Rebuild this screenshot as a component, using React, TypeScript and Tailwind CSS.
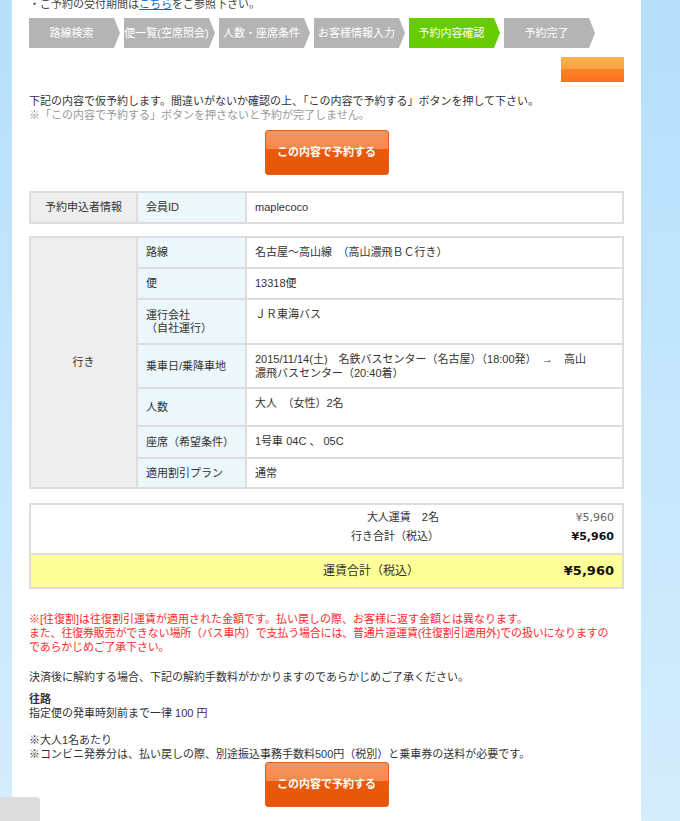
import React from 'react';

const STEPS = ['路線検索', '便一覧(空席照会)', '人数・座席条件', 'お客様情報入力', '予約内容確認', '予約完了'];
const ACTIVE_STEP = 4;

const ROWS: { label: React.ReactNode; value: React.ReactNode; h: string }[] = [
  { label: '路線', value: '名古屋～高山線　（高山濃飛ＢＣ行き）', h: 'h-[31px]' },
  { label: '便', value: '13318便', h: 'h-[31px]' },
  {
    label: (
      <>
        運行会社
        <br />
        （自社運行）
      </>
    ),
    value: 'ＪＲ東海バス',
    h: 'h-[45px]',
  },
  {
    label: '乗車日/乗降車地',
    value: (
      <>
        2015/11/14(土)　名鉄バスセンター（名古屋）（18:00発）　→　高山
        <br />
        濃飛バスセンター（20:40着）
      </>
    ),
    h: 'h-[44px]',
  },
  { label: '人数', value: '大人　（女性）2名', h: 'h-[38px]' },
  { label: '座席（希望条件）', value: '1号車 04C 、 05C', h: 'h-[32px]' },
  { label: '適用割引プラン', value: '通常', h: 'h-[30px]' },
];

function ReserveButton() {
  return (
    <button
      type="button"
      className="w-[124px] h-[45px] rounded-[3px] border border-[#e0601c] bg-[linear-gradient(to_bottom,#f6935c_0%,#f38a50_42%,#ea5a0c_42%,#e65506_100%)] text-white text-[11px] font-bold"
    >
      この内容で予約する
    </button>
  );
}

function StepBar() {
  return (
    <div className="flex gap-[4px] mt-[6px]">
      {STEPS.map((s, i) => (
        <div
          key={s}
          className={`w-[91px] h-[30px] pr-[6px] flex items-center justify-center text-white text-[11px] whitespace-nowrap [clip-path:polygon(0_0,85px_0,91px_50%,85px_100%,0_100%)] ${
            i === ACTIVE_STEP ? 'bg-[#66cc00]' : 'bg-[#b4b4b4]'
          }`}
        >
          {s}
        </div>
      ))}
    </div>
  );
}

export default function App() {
  return (
    <div
      className="relative w-full h-[821px] overflow-hidden flex bg-[linear-gradient(to_bottom,#b6dffb,#d4edfd)] text-[#333] text-[11px]"
      style={{ fontFamily: '"Liberation Sans", "Noto Sans CJK JP", sans-serif' }}
    >
      <div className="ml-[12px] w-[629px] bg-white px-[17px]">
        <p className="-mt-[4px] leading-[16px] text-[#444]">
          ・ご予約の受付期間は<span className="text-[#0a6fc2] underline">こちら</span>をご参照下さい。
        </p>

        <StepBar />

        <div className="flex justify-end mt-[9px]">
          <div className="w-[63px] h-[25px] bg-[linear-gradient(to_bottom,#f9b352_0%,#f8a243_48%,#fd8427_48%,#f9721b_100%)]" />
        </div>

        <div className="mt-[12px] leading-[14px]">
          <p>下記の内容で仮予約します。間違いがないか確認の上、「この内容で予約する」ボタンを押して下さい。</p>
          <p className="text-[#999]">※「この内容で予約する」ボタンを押さないと予約が完了しません。</p>
        </div>

        <div className="flex justify-center mt-[8px]">
          <ReserveButton />
        </div>

        {/* 申込者情報 */}
        <table className="mt-[16px] w-full table-fixed border-collapse">
          <colgroup>
            <col className="w-[107px]" />
            <col className="w-[109px]" />
            <col />
          </colgroup>
          <tbody>
            <tr className="h-[31px]">
              <td className="border-2 border-[#dddddd] bg-[#eeeeee] text-center align-middle">予約申込者情報</td>
              <td className="border-2 border-[#dddddd] bg-[#ebf7fb] px-[8px] align-middle">会員ID</td>
              <td className="border-2 border-[#dddddd] px-[8px] align-middle">maplecoco</td>
            </tr>
          </tbody>
        </table>

        {/* 行き */}
        <table className="mt-[12px] w-full table-fixed border-collapse">
          <colgroup>
            <col className="w-[107px]" />
            <col className="w-[109px]" />
            <col />
          </colgroup>
          <tbody>
            {ROWS.map((r, i) => (
              <tr key={i} className={r.h}>
                {i === 0 && (
                  <td rowSpan={ROWS.length} className="border-2 border-[#dddddd] bg-[#eeeeee] text-center align-middle">
                    行き
                  </td>
                )}
                <td className="border-2 border-[#dddddd] bg-[#ebf7fb] px-[8px] align-middle leading-[13px]">{r.label}</td>
                <td className="border-2 border-[#dddddd] px-[8px] pt-[7px] align-top leading-[14px]">{r.value}</td>
              </tr>
            ))}
          </tbody>
        </table>

        {/* 運賃 */}
        <div className="mt-[14px] border-2 border-[#dddddd]">
          <div className="pt-[3px] pb-[7px] leading-[19px]">
            <div className="flex">
              <span className="flex-1 text-right">大人運賃　2名</span>
              <span
                className="w-[183px] pr-[8px] text-right text-[#666]"
                style={{ fontFamily: '"DejaVu Sans", sans-serif' }}
              >
                ¥5,960
              </span>
            </div>
            <div className="flex">
              <span className="flex-1 text-right">行き合計（税込）</span>
              <span
                className="w-[183px] pr-[8px] text-right font-bold text-[#111]"
                style={{ fontFamily: '"DejaVu Sans", sans-serif' }}
              >
                ¥5,960
              </span>
            </div>
          </div>
          <div className="h-[34px] flex items-center bg-[#ffff99] border-t-2 border-[#dddddd] text-[12px]">
            <span className="flex-1 text-right">運賃合計（税込）</span>
            <span
              className="w-[203px] pr-[8px] text-right font-bold text-[13px] text-[#111]"
              style={{ fontFamily: '"DejaVu Sans", sans-serif' }}
            >
              ¥5,960
            </span>
          </div>
        </div>

        <div className="mt-[23px] leading-[14px] text-[#ff2a2a] whitespace-nowrap">
          <p>※[往復割]は往復割引運賃が適用された金額です。払い戻しの際、お客様に返す金額とは異なります。</p>
          <p className="tracking-[-0.2px]">
            また、往復券販売ができない場所（バス車内）で支払う場合には、普通片道運賃(往復割引適用外)での扱いになりますの
            <br />
            であらかじめご了承下さい。
          </p>
        </div>

        <p className="mt-[16px] leading-[14px]">決済後に解約する場合、下記の解約手数料がかかりますのであらかじめご了承ください。</p>

        <div className="mt-[8px] leading-[14px]">
          <p className="font-bold">往路</p>
          <p>指定便の発車時刻前まで一律 100 円</p>
          <p className="mt-[13px]">※大人1名あたり</p>
          <p>※コンビニ発券分は、払い戻しの際、別途振込事務手数料500円（税別）と乗車券の送料が必要です。</p>
        </div>

        <div className="flex justify-center mt-[1px]">
          <ReserveButton />
        </div>
      </div>

      <div className="absolute left-0 bottom-0 w-[40px] h-[24px] bg-[#dcdcdc] rounded-tr-[4px]" />
    </div>
  );
}
